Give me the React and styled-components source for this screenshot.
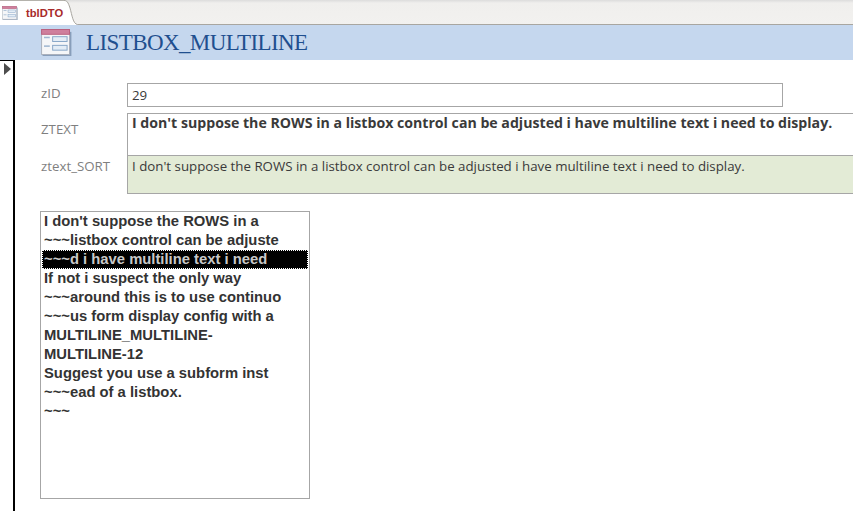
import React from 'react'
import styled, { createGlobalStyle } from 'styled-components'

const Global = createGlobalStyle`
  html, body { margin: 0; padding: 0; background: #fff; }
  body { width: 853px; height: 511px; overflow: hidden; }
`;

const Page = styled.div`
  width: 853px;
  height: 511px;
  display: flex;
  flex-direction: column;
  overflow: hidden;
  background: #fff;
`;

const TabStrip = styled.div`
  height: 25px;
  flex: none;
  display: flex;
  background: linear-gradient(#dcdcdc 0, #f0efed 3px, #f2f1ef 100%);
  box-shadow: inset 0 -1px 0 #a8a6a0;
`;

const Tab = styled.div`
  display: flex;
  align-items: center;
  height: 25px;
`;

const TabBody = styled.div`
  display: flex;
  align-items: center;
  gap: 8px;
  height: 25px;
  padding-left: 2px;
  width: 64px;
  box-sizing: border-box;
  background: #fff;
  border-top: 1px solid #b4b2ac;
`;

const TabName = styled.span`
  font: bold 11.2px "Liberation Sans", Arial, sans-serif;
  color: #a82a2a;
  white-space: nowrap;
`;

const TabCurve = styled.svg`
  display: block;
  width: 14px;
  height: 25px;
  flex: none;
`;

const Header = styled.header`
  height: 35px;
  flex: none;
  display: flex;
  align-items: center;
  gap: 14px;
  padding-left: 41px;
  background: #c5d7ee;
`;

const Title = styled.h1`
  margin: 0;
  font: normal 23px "Liberation Serif", "Times New Roman", serif;
  letter-spacing: -0.6px;
  color: #1f4f8f;
`;

const Detail = styled.div`
  flex: 1;
  display: flex;
  min-height: 0;
`;

const Selector = styled.div`
  width: 9px;
  flex: none;
  border-top: 1px solid #000;
  border-right: 2px solid #000;
  padding: 2px 0 0 4px;
`;

const Arrow = styled.div`
  width: 0;
  height: 0;
  border-left: 7px solid #4d4d4d;
  border-top: 6px solid transparent;
  border-bottom: 6px solid transparent;
`;

const FormBody = styled.div`
  flex: 1;
  min-width: 0;
  padding: 23px 0 0 25px;
`;

const Fields = styled.div`
  display: grid;
  grid-template-columns: 87px 1fr;
`;

const Label = styled.div`
  font: 13.3px "Open Sans", sans-serif;
  color: #7f7f7f;
  padding: ${p => p.$pad}px 0 0 1px;
  white-space: nowrap;
  height: ${p => p.$h}px;
  box-sizing: border-box;
`;

const Field = styled.div`
  box-sizing: border-box;
  height: ${p => p.$h}px;
  margin-bottom: ${p => p.$gap || 0}px;
  width: ${p => p.$w}px;
  border: 1px solid #a6a6a6;
  ${p => p.$open && 'border-right: 0;'}
  ${p => p.$flush && 'border-top: 0;'}
  background: ${p => p.$bg || '#fff'};
  padding: ${p => p.$pt}px 0 0 4px;
  color: #3a3a3a;
  white-space: nowrap;
  font: ${p => p.$bold ? 'bold 14.15px/17px "Open Sans", sans-serif' : '13.3px "Open Sans", sans-serif'};
`;

const ListBox = styled.div`
  box-sizing: border-box;
  width: 270px;
  height: 288px;
  margin-top: 17px;
  border: 1px solid #a6a6a6;
  padding: 0 1px;
  overflow: hidden;
`;

const Option = styled.div`
  box-sizing: border-box;
  height: 19px;
  padding-left: 2px;
  white-space: nowrap;
  font: bold 14.8px/19px "Liberation Sans", Arial, sans-serif;
  color: ${p => p.$selected ? '#c8c8c8' : '#333'};
  background: ${p => p.$selected ? '#000' : 'transparent'};
  outline: ${p => p.$selected ? '1px dotted #fff' : 'none'};
  outline-offset: -1px;
`;

const TableIcon = ({ size }) => (
  <svg width={size} height={size * 0.9} viewBox="0 0 32 29" style={{ display: 'block', flex: 'none' }}>
    <rect x="1.5" y="3" width="30" height="26" fill="#56708f" opacity="0.55" />
    <rect x="0.5" y="0.5" width="29" height="26" fill="#f5f6f8" stroke="#a9b0bb" />
    <rect x="0.5" y="0.5" width="29" height="5" fill="#cf7f9c" stroke="#b9607f" />
    <rect x="3" y="8" width="6" height="1.6" fill="#9fb6cf" />
    <rect x="12" y="8" width="15" height="5" fill="#e4edf6" stroke="#86a5c6" />
    <rect x="3" y="17" width="6" height="1.6" fill="#9fb6cf" />
    <rect x="12" y="17" width="15" height="5" fill="#e4edf6" stroke="#86a5c6" />
  </svg>
);

const lines = [
  "I don't suppose the ROWS in a",
  '~~~listbox control can be adjuste',
  '~~~d i have multiline text i need',
  'If not i suspect the only way',
  '~~~around this is to use continuo',
  '~~~us form display config with a',
  'MULTILINE_MULTILINE-',
  'MULTILINE-12',
  'Suggest you use a subform inst',
  '~~~ead of a listbox.',
  '~~~',
];

const sentence = "I don't suppose the ROWS in a listbox control can be adjusted i have multiline text i need to display.";

export default function App() {
  return (
    <Page>
      <Global />
      <TabStrip>
        <Tab>
          <TabBody>
            <TableIcon size={16} />
            <TabName>tblDTO</TabName>
          </TabBody>
          <TabCurve viewBox="0 0 14 25">
            <path d="M0 0.5 C3 0.5 4 2 6 8 C8 15 9 24 13.5 24.5 L13.5 25 L0 25 Z" fill="#fff" />
            <path d="M0 0.5 C3 0.5 4 2 6 8 C8 15 9 24 13.5 24.5" fill="none" stroke="#a8a6a0" />
          </TabCurve>
        </Tab>
      </TabStrip>
      <Header>
        <TableIcon size={31} />
        <Title>LISTBOX_MULTILINE</Title>
      </Header>
      <Detail>
        <Selector><Arrow /></Selector>
        <FormBody>
          <Fields>
            <Label $h={30} $pad={1}>zID</Label>
            <Field $h={24} $w={656} $gap={6} $pt={2}>29</Field>
            <Label $h={43} $pad={7}>ZTEXT</Label>
            <Field $h={43} $w={760} $open $bold $pt={0}>{sentence}</Field>
            <Label $h={38} $pad={1}>ztext_SORT</Label>
            <Field $h={38} $w={760} $open $flush $bg="#e3ebd6" $pt={1}>{sentence}</Field>
          </Fields>
          <ListBox>
            {lines.map((line, i) => (
              <Option key={i} $selected={i === 2}>{line}</Option>
            ))}
          </ListBox>
        </FormBody>
      </Detail>
    </Page>
  )
}
